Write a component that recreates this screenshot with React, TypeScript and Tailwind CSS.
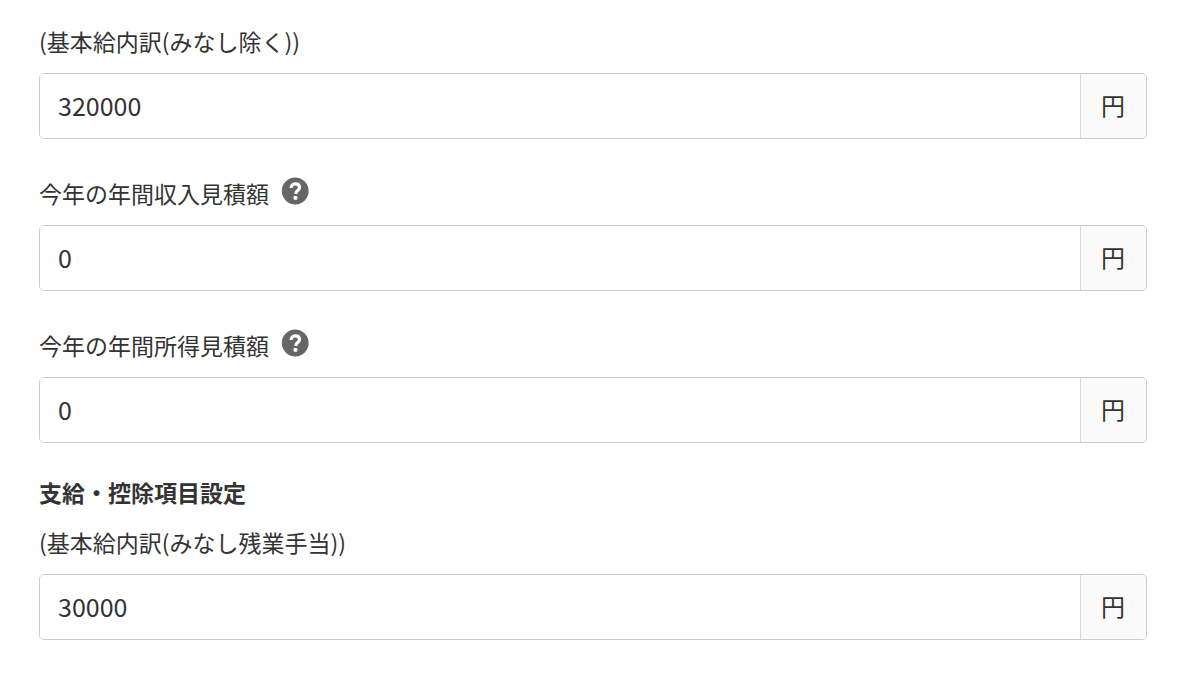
import React, { useState } from 'react';

interface AmountFieldProps {
  id: string;
  label: string;
  initialValue: string;
  hasHelp?: boolean;
}

function HelpIcon() {
  return (
    <svg className="h-7 w-7" viewBox="0 0 28 28" aria-hidden="true">
      <circle cx="14.2" cy="14" r="13.4" fill="#666666" />
      <path
        d="M10.1 11.1C10.1 8.6 11.8 6.9 14.3 6.9s4.2 1.4 4.2 3.6c0 3-3.9 3-3.9 6.4"
        fill="none"
        stroke="#ffffff"
        strokeWidth="3.2"
      />
      <rect x="12.6" y="19" width="3.8" height="3.8" rx="1.2" fill="#ffffff" />
    </svg>
  );
}

function AmountField({ id, label, initialValue, hasHelp }: AmountFieldProps) {
  const [value, setValue] = useState(initialValue);

  return (
    <div>
      <div className="flex h-8 items-center gap-3">
        <label htmlFor={id} className="text-[23px] leading-8">
          {label}
        </label>
        {hasHelp && (
          <button type="button" aria-label="ヘルプ" className="pb-1">
            <HelpIcon />
          </button>
        )}
      </div>
      <div className="mt-4 flex h-[66px] overflow-hidden rounded-[5px] border border-[#cccccc]">
        <input
          id={id}
          type="text"
          inputMode="numeric"
          value={value}
          onChange={(e) => setValue(e.target.value)}
          className="min-w-0 flex-1 bg-white px-[18px] pb-px text-[25px] focus:outline-none"
        />
        <span className="flex w-[66px] items-center justify-center border-l border-[#d8d8d8] bg-[#fafafa] pr-px pb-0.5 text-2xl">
          円
        </span>
      </div>
    </div>
  );
}

export default function App() {
  return (
    <form className="bg-white pt-[25px] pr-[33px] pb-9 pl-[39px] font-['Noto_Sans_CJK_JP',sans-serif] text-[#333333]">
      <div className="flex flex-col gap-[38px]">
        <AmountField id="base-pay" label="(基本給内訳(みなし除く))" initialValue="320000" />
        <AmountField id="annual-revenue" label="今年の年間収入見積額" initialValue="0" hasHelp />
        <AmountField id="annual-income" label="今年の年間所得見積額" initialValue="0" hasHelp />
      </div>

      {/* 支給・控除項目 */}
      <h2 className="mt-[33px] mb-[18px] text-[23px] leading-8 font-bold">支給・控除項目設定</h2>
      <AmountField id="overtime-pay" label="(基本給内訳(みなし残業手当))" initialValue="30000" />
    </form>
  );
}
